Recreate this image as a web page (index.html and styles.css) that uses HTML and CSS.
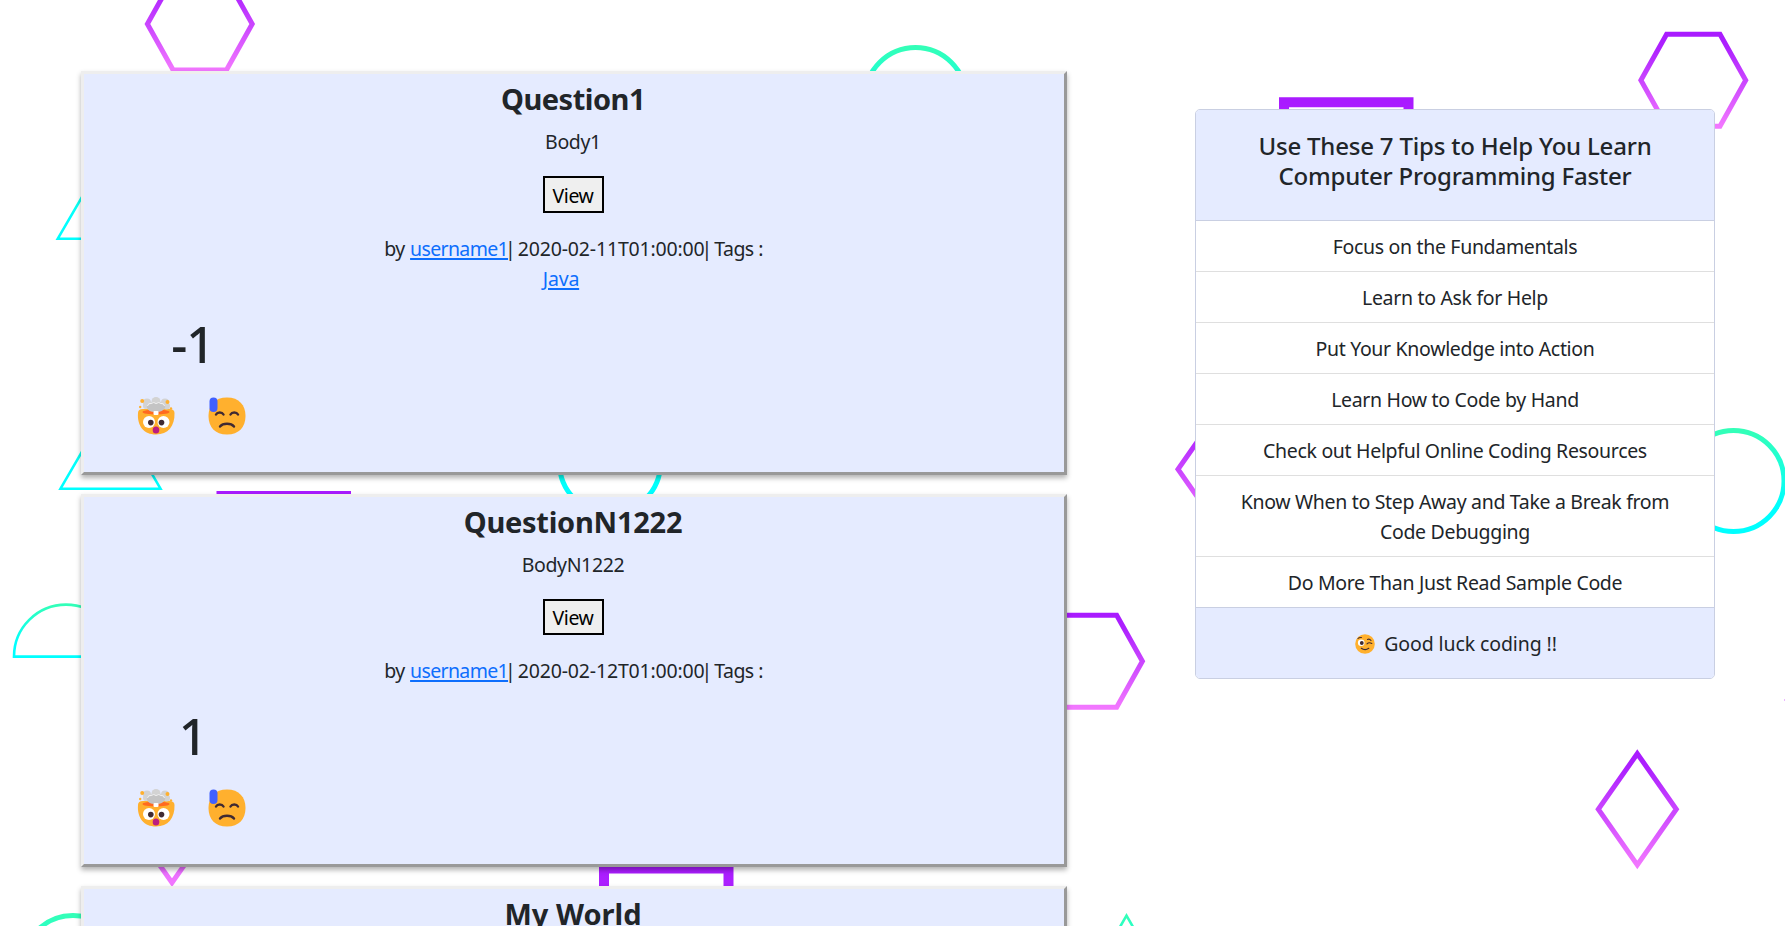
FILE: index.html
```html
<!DOCTYPE html>
<html lang="en">
<head>
<meta charset="utf-8">
<title>Questions</title>
<link rel="stylesheet" href="styles.css">
</head>
<body>
<svg class="backdrop" width="1785" height="926" viewBox="0 0 1785 926" aria-hidden="true">
  <defs>
    <linearGradient id="violet" x1="0" y1="0" x2="0" y2="1"><stop offset="0" stop-color="#a91bff"/><stop offset="0.15" stop-color="#ae22ff"/><stop offset="1" stop-color="#f277ff"/></linearGradient>
    <linearGradient id="aqua" x1="0" y1="0" x2="0" y2="1"><stop offset="0" stop-color="#33ffb8"/><stop offset="0.75" stop-color="#0ff"/><stop offset="1" stop-color="#0ff"/></linearGradient>
    <path id="hexagon" d="M-52.4 0L-26.7-46H26.7L52.4 0L26.7 46H-26.7Z" fill="none" stroke="url(#violet)" stroke-width="5"/>
    <circle id="ring" r="50.5" fill="none" stroke="url(#aqua)" stroke-width="5"/>
    <path id="diamond" d="M0-55.6L39 0L0 55.6L-39 0Z" fill="none" stroke="url(#violet)" stroke-width="5"/>
    <path id="triangle" d="M0-87.3L50-1.3H-50Z" fill="none" stroke="url(#aqua)" stroke-width="2.6"/>
    <path id="frame" d="M5 5H129.5V129.5H5Z" fill="none" stroke="url(#violet)" stroke-width="10"/>
  </defs>
  <use href="#hexagon" x="199.8" y="24"/>
  <use href="#hexagon" x="1693.3" y="80.2"/>
  <use href="#hexagon" x="1090" y="661.3"/>
  <use href="#ring" x="915.5" y="98"/>
  <use href="#ring" x="610" y="463"/>
  <use href="#ring" x="73" y="966"/>
  <use href="#ring" x="1733.5" y="481"/>
  <use href="#triangle" x="107.8" y="240"/>
  <use href="#triangle" x="110.5" y="490"/>
  <use href="#triangle" x="1126.5" y="1003"/>
  <path d="M14 656.6A52 52 0 0 1 118 656.6Z" fill="none" stroke="url(#aqua)" stroke-width="2.6"/>
  <use href="#frame" x="216.500" y="491"/>
  <use href="#frame" x="599" y="863.5"/>
  <use href="#frame" x="1279" y="97.2"/>
  <use href="#diamond" x="1637.3" y="809.3"/>
  <use href="#diamond" x="1217" y="469.3"/>
  <use href="#diamond" x="172" y="827"/>
  <use href="#diamond" x="1826.3" y="700"/>
</svg>

<svg class="sprites" aria-hidden="true">
  <symbol id="mind-blown" viewBox="0 0 38 38">
    <path d="M1 16Q1 12 6 12H32Q37.500 12 37.500 16C38 29 31 37.500 19 37.500S0 29 1 16Z" fill="#ffb02e"/>
    <ellipse cx="19" cy="15" rx="13.500" ry="2.600" fill="#ff6a1f"/>
    <g fill="#d3d3d3"><circle cx="10" cy="5.500" r="4"/><circle cx="19" cy="4.500" r="4.500"/><circle cx="28" cy="5.500" r="4"/><circle cx="9" cy="9" r="3"/><circle cx="29.500" cy="9" r="3.500"/></g>
    <path d="M10 11Q9 7 13 6.500Q16 4 19 6Q23 4 25 6.500Q29 7 28 11Q25 15.500 19 15Q12 15.500 10 11Z" fill="#c4c4c4"/>
    <path d="M10.500 9Q11 6 14 6.500Q17 4.500 19 6.500Q22 4.500 24 6.500Q27 6 27.500 9" fill="none" stroke="#f4f4f4"/>
    <rect x="16.500" y="14" width="5" height="4" rx="1" fill="#fff"/>
    <g fill="#ffb02e"><circle cx="5.200" cy="4" r="2"/><circle cx="30.500" cy="5" r="2"/><circle cx="3.200" cy="10" r="1.200"/><circle cx="34" cy="11.500" r="1.200"/></g>
    <g fill="#fff"><circle cx="12" cy="25" r="6"/><circle cx="26.500" cy="25" r="6"/></g>
    <g fill="#402a32"><circle cx="13.800" cy="25.600" r="2.800"/><circle cx="24.500" cy="25.600" r="2.800"/></g>
    <ellipse cx="19" cy="33" rx="3.300" ry="3.500" fill="#bb1d80"/>
  </symbol>
  <symbol id="downcast" viewBox="0 0 38 38">
    <path d="M19 .5C31 .5 37.500 8 37.500 19S31 37.500 19 37.500S.5 30 .5 19S7 .5 19 .5Z" fill="#ffb02e"/>
    <rect x="1.500" y=".5" width="8" height="14.500" rx="4" fill="#4060ff"/>
    <path d="M8 17.500C9.500 14.800 14 14.800 15.500 17.500M22.500 17.500C24 14.800 28.500 14.800 30 17.500M12 29.500C15 25.800 23 25.800 26 29.500" fill="none" stroke="#402a32" stroke-width="2.400" stroke-linecap="round"/>
  </symbol>
  <symbol id="wink" viewBox="0 0 20 20">
    <circle cx="10" cy="10" r="9.800" fill="#ffb02e"/>
    <circle cx="6.200" cy="8.800" r="3.300" fill="#fff"/>
    <circle cx="6.800" cy="9" r="1.900" fill="#402a32"/>
    <path d="M12 9.800Q14 7.800 16.800 9.500M3 4.500Q4.200 3.200 6.500 3.500M12.500 5.500Q14.500 4.500 16 6.500M6.300 14.300Q10 17 13.800 14.300" fill="none" stroke="#402a32" stroke-width="1.100" stroke-linecap="round"/>
  </symbol>
</svg>

<main class="page">
  <section class="questions">
    <article class="question">
      <h2 class="question__title">Question1</h2>
      <p class="question__body">Body1</p>
      <button class="question__view">View</button>
      <p class="question__meta">by <a class="link" href="#">username1</a><span class="bar">|</span> <span class="date">2020-02-11T01:00:00</span><span class="bar">|</span> Tags :</p>
      <p class="question__tags"><a class="link" href="#">Java</a></p>
      <div class="votes">
        <div class="votes__score">-1</div>
        <div class="votes__faces"><svg class="face"><use href="#mind-blown"/></svg><svg class="face"><use href="#downcast"/></svg></div>
      </div>
    </article>
    <article class="question question--short">
      <h2 class="question__title">QuestionN1222</h2>
      <p class="question__body">BodyN1222</p>
      <button class="question__view">View</button>
      <p class="question__meta">by <a class="link" href="#">username1</a><span class="bar">|</span> <span class="date">2020-02-12T01:00:00</span><span class="bar">|</span> Tags :</p>
      <div class="votes">
        <div class="votes__score">1</div>
        <div class="votes__faces"><svg class="face"><use href="#mind-blown"/></svg><svg class="face"><use href="#downcast"/></svg></div>
      </div>
    </article>
    <article class="question question--last">
      <h2 class="question__title">My World</h2>
    </article>
  </section>

  <aside class="tips">
    <h4 class="tips__header">Use These 7 Tips to Help You Learn<br>Computer Programming Faster</h4>
    <ul class="tips__list">
      <li class="tips__item">Focus on the Fundamentals</li>
      <li class="tips__item">Learn to Ask for Help</li>
      <li class="tips__item">Put Your Knowledge into Action</li>
      <li class="tips__item">Learn How to Code by Hand</li>
      <li class="tips__item">Check out Helpful Online Coding Resources</li>
      <li class="tips__item">Know When to Step Away and Take a Break from<br>Code Debugging</li>
      <li class="tips__item">Do More Than Just Read Sample Code</li>
    </ul>
    <div class="tips__footer"><svg class="wink"><use href="#wink"/></svg><span>Good luck coding !!</span></div>
  </aside>
</main>
</body>
</html>
```

FILE: styles.css
```css
* { box-sizing: border-box; }

body {
  margin: 0;
  height: 926px;
  overflow: hidden;
  background: #fff;
  color: #212529;
  font: 19.5px/30px "Segoe UI", "Noto Sans", "Open Sans", sans-serif;
  letter-spacing: -0.55px;
}

.backdrop { position: absolute; top: 0; left: 0; z-index: -1; }
.sprites { display: none; }

.page {
  display: flex;
  align-items: flex-start;
  gap: 128px;
  height: 926px;
  padding-left: 81px;
  overflow: hidden;
}

.questions {
  display: flex;
  flex-direction: column;
  gap: 19px;
  width: 986px;
  padding-top: 71px;
}

.question {
  display: flex;
  flex-direction: column;
  align-items: center;
  flex: none;
  height: 404px;
  padding: 7px 2px 0 0;
  border: 3px solid;
  border-color: #eee #999 #999 #eee;
  background: #e5ebff;
  box-shadow: 0 3px 5px rgba(0, 0, 0, .3);
}
.question--short { height: 373px; }
.question--last { height: 60px; }

.question__title {
  margin: 0 0 10px;
  font-size: 29px;
  line-height: 36px;
  font-weight: 700;
  letter-spacing: -0.5px;
}
.question--short .question__title { letter-spacing: -0.25px; }
.question--last .question__title { letter-spacing: 0; }

.question__body { margin: 0 0 19px; letter-spacing: -0.35px; }

.question__view {
  width: 61px;
  height: 37px;
  margin-bottom: 21px;
  padding: 2px 0 0;
  border: 2px solid #000;
  background: #efefef;
  color: #000;
  font: inherit;
  line-height: 28px;
  letter-spacing: -0.4px;
}
.question--short .question__view { height: 36px; }

.question__meta, .question__tags { margin: 0; }
.question__meta { padding-left: 1px; }
.question__tags { padding-right: 24px; letter-spacing: -0.2px; }
.link { color: #0d6efd; text-decoration-thickness: 2px; text-underline-offset: 2px; }
.question__meta .link { margin-left: 1px; letter-spacing: -0.65px; }
.bar { margin: 0 -2px 0 -3px; }
.date { letter-spacing: -0.17px; }

.votes { align-self: flex-start; width: 109px; margin: 20px 0 0 53px; }
.votes__score {
  height: 60px;
  padding-left: 2px;
  text-align: center;
  font-size: 50px;
  line-height: 60px;
  font-weight: 550;
  letter-spacing: -1px;
}
.votes__faces { display: flex; gap: 33px; margin-top: 23px; }
.face { width: 38px; height: 38px; flex: none; }

.tips {
  width: 520px;
  margin-top: 109px;
  border: 1px solid #c9cfe2;
  border-radius: 5px;
  background: #fff;
  overflow: hidden;
  text-align: center;
  letter-spacing: -0.32px;
}
.tips__header {
  margin: 0;
  padding: 21px 20px 29px;
  border-bottom: 1px solid #c9cfe2;
  background: #e5ebff;
  font-size: 24px;
  line-height: 30px;
  font-weight: 550;
  letter-spacing: -0.2px;
}
.tips__list { margin: 0; padding: 0; list-style: none; }
.tips__item { padding: 11px 10px 9px; border-bottom: 1px solid #dfdfdf; }
.tips__item:last-child { border-bottom-color: #c9cfe2; }
.tips__footer {
  display: flex;
  justify-content: center;
  align-items: center;
  gap: 9px;
  height: 70px;
  padding: 1px 0 0 2px;
  background: #e5ebff;
  letter-spacing: -0.1px;
}
.wink { width: 20px; height: 20px; }
```
